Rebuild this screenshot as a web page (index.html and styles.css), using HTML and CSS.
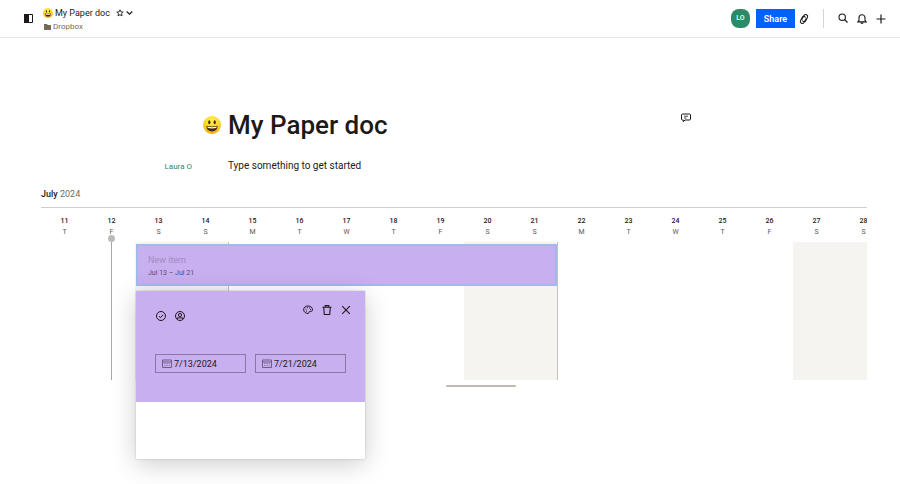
FILE: index.html
```html
<!DOCTYPE html>
<html lang="en">
<head>
  <meta charset="UTF-8">
  <meta name="viewport" content="width=device-width, initial-scale=1">
  <title>My Paper doc</title>
  <link rel="stylesheet" href="styles.css">
</head>
<body>

  <svg class="sprite" width="0" height="0" aria-hidden="true">
    <radialGradient id="face" cx="50%" cy="25%" r="80%">
      <stop offset="0" stop-color="#fff04a"/>
      <stop offset="0.6" stop-color="#fbd424"/>
      <stop offset="1" stop-color="#ee9d13"/>
    </radialGradient>
    <symbol id="smile" viewBox="0 0 18 18">
      <circle cx="9" cy="9" r="9" fill="url(#face)"/>
      <ellipse cx="6.3" cy="6.2" rx="1.1" ry="2" fill="#43280b"/>
      <ellipse cx="11.7" cy="6.2" rx="1.1" ry="2" fill="#43280b"/>
      <path d="M3.4 9.8c3.6 1 7.600 1 11.200 0 0 3.600-2.300 5.700-5.600 5.700s-5.600-2.100-5.600-5.700z" fill="#43280b"/>
      <path d="M4.300 10.600c3.100.7 6.300.7 9.400 0l-.4 1.500c-2.800.6-5.800.6-8.600 0z" fill="#fff"/>
    </symbol>
    <symbol id="calendar" viewBox="0 0 10 9">
      <path d="M.5 1h9v7.500h-9zM.5 3h9" fill="none" stroke="#6f5d84"/>
      <path d="M2 4.500h6M2 6.500h6" stroke="#8c78a6" stroke-dasharray="1 .6"/>
    </symbol>
  </svg>

  <header class="topbar">
    <button class="icon-btn" aria-label="Toggle sidebar">
      <svg width="9" height="9" viewBox="0 0 9 9"><path d="M.5.5h8v8h-8z" fill="none" stroke="#1e1919"/><path d="M0 0h5v9H0z" fill="#1e1919"/></svg>
    </button>
    <div class="doc-info">
      <div class="doc-name">
        <svg width="10" height="10"><use href="#smile"/></svg>
        <span>My Paper doc</span>
        <button class="icon-btn star" aria-label="Star">
          <svg width="8" height="8" viewBox="0 0 8 8"><path d="M4 .8l.9 2.100 2.300.2-1.700 1.500.5 2.300L4 5.700 2 6.900l.5-2.300L.8 3.100l2.300-.2z" fill="none" stroke="#1e1919" stroke-width=".9"/></svg>
        </button>
        <button class="icon-btn" aria-label="More">
          <svg width="7" height="8" viewBox="0 0 7 8"><path d="M.7 2.500l2.800 2.700 2.800-2.700" fill="none" stroke="#1e1919" stroke-width="1.200"/></svg>
        </button>
      </div>
      <a class="folder" href="#">
        <svg width="7" height="6" viewBox="0 0 7 6"><path d="M0 0h3l.7 1H7v5H0z" fill="#736c5c"/></svg>
        Dropbox
      </a>
    </div>
    <div class="actions">
      <span class="avatar">LO</span>
      <button class="share">Share</button>
      <button class="icon-btn link" aria-label="Copy link">
        <svg width="10" height="12" viewBox="0 0 10 12" fill="none" stroke="#1e1919" stroke-width="1.100" stroke-linecap="round"><path d="M2.900 6.300L5 2.500C6.200.5 9.500 2.200 8.500 4.300L6.600 8c-.8 1.300-2.600.9-2.900-.3"/><path d="M7.100 5.700L5 9.500C3.800 11.500.5 9.800 1.500 7.700L3.400 4c.8-1.300 2.600-.9 2.900.3"/></svg>
      </button>
      <span class="divider"></span>
      <button class="icon-btn" aria-label="Search">
        <svg width="10" height="12" viewBox="0 0 10 12"><circle cx="4.200" cy="4.200" r="3.200" fill="none" stroke="#1e1919" stroke-width="1.100"/><path d="M6.500 6.500L9.500 9.500" stroke="#1e1919" stroke-width="1.200"/></svg>
      </button>
      <button class="icon-btn" aria-label="Notifications">
        <svg width="10" height="10" viewBox="0 0 10 10" fill="none" stroke="#1e1919" stroke-width="1.100"><path d="M.8 7.900h8.400L8 6.300V3.700a3 3 0 0 0-6 0v2.600z"/><path d="M3.800 8.200c.2 1.600 2.200 1.600 2.400 0"/></svg>
      </button>
      <button class="icon-btn" aria-label="Create">
        <svg width="10" height="10" viewBox="0 0 10 10"><path d="M5 .5v9M.5 5h9" stroke="#1e1919" stroke-width="1.200"/></svg>
      </button>
    </div>
  </header>

  <main>
    <div class="doc-row title-row">
      <svg class="emoji" width="18" height="18"><use href="#smile"/></svg>
      <h1>My Paper doc</h1>
      <button class="icon-btn comment" aria-label="Add comment">
        <svg width="10" height="10" viewBox="0 0 10 10" fill="none" stroke="#1e1919"><path d="M1.500 1h7q1 0 1 1v4q0 1-1 1H4L2.300 8.700V7h-.8q-1 0-1-1V2q0-1 1-1z" stroke-linejoin="round"/><path d="M3 3.200h4M3 5h2.500" stroke-width=".8"/></svg>
      </button>
    </div>
    <div class="doc-row text-row">
      <span class="author">Laura O</span>
      <p>Type something to get started</p>
    </div>

    <section class="timeline">
      <h2>July <span>2024</span></h2>
      <div class="board">
        <div class="days">
          <div class="day"><b>11</b>T</div>
          <div class="day"><b>12</b>F</div>
          <div class="day"><b>13</b>S</div>
          <div class="day"><b>14</b>S</div>
          <div class="day"><b>15</b>M</div>
          <div class="day"><b>16</b>T</div>
          <div class="day"><b>17</b>W</div>
          <div class="day"><b>18</b>T</div>
          <div class="day"><b>19</b>F</div>
          <div class="day"><b>20</b>S</div>
          <div class="day"><b>21</b>S</div>
          <div class="day"><b>22</b>M</div>
          <div class="day"><b>23</b>T</div>
          <div class="day"><b>24</b>W</div>
          <div class="day"><b>25</b>T</div>
          <div class="day"><b>26</b>F</div>
          <div class="day"><b>27</b>S</div>
          <div class="day"><b>28</b>S</div>
          <div class="today"></div>
          <div class="weekend first"></div>
          <div class="weekend second"></div>
          <div class="weekend third"></div>
          <div class="item">
            <div class="item-name">New item</div>
            <div class="item-dates">Jul 13 – Jul 21</div>
          </div>
        </div>

        <div class="popover">
          <div class="popover-top">
            <div class="tools">
              <div class="tool-group left">
                <button class="icon-btn" aria-label="Mark done">
                  <svg width="10" height="10" viewBox="0 0 10 10" fill="none" stroke="#1e1919"><circle cx="5" cy="5" r="4.500"/><path d="M3 5.200l1.500 1.400L7.100 3.700"/></svg>
                </button>
                <button class="icon-btn" aria-label="Assign">
                  <svg width="10" height="10" viewBox="0 0 10 10" fill="none" stroke="#1e1919"><circle cx="5" cy="5" r="4.500"/><circle cx="5" cy="4" r="1.600"/><path d="M2.200 8.100V6.900h5.600v1.200"/></svg>
                </button>
              </div>
              <div class="tool-group">
                <button class="icon-btn" aria-label="Color">
                  <svg width="10" height="10" viewBox="0 0 10 10" fill="none" stroke="#1e1919"><path d="M5 1C2.500 1 .6 2.500.6 4.600S2.500 8.500 5 8.500c1.300 0 .5-1.300 1.300-1.800 1-.6 3.200.4 3.200-2C9.500 2.500 7.500 1 5 1z"/><path d="M2.400 4.200h1M3.900 2.700h1M6 2.900h1M7 4.600h1M3 6.100h1"/></svg>
                </button>
                <button class="icon-btn" aria-label="Delete">
                  <svg width="10" height="10" viewBox="0 0 10 10" fill="none" stroke="#1e1919" stroke-width="1.100"><path d="M.5 2.200h9M3.200 2V.6h3.600V2M1.700 2.300l.6 7.200h5.400l.6-7.200"/></svg>
                </button>
                <button class="icon-btn" aria-label="Close">
                  <svg width="10" height="10" viewBox="0 0 10 10"><path d="M1.200 1.200l7.600 7.600M8.800 1.200L1.200 8.800" stroke="#1e1919" stroke-width="1.100"/></svg>
                </button>
              </div>
            </div>
            <div class="dates">
              <label class="date">
                <svg width="10" height="9"><use href="#calendar"/></svg>
                <input type="text" value="7/13/2024" aria-label="Start date">
              </label>
              <label class="date">
                <svg width="10" height="9"><use href="#calendar"/></svg>
                <input type="text" value="7/21/2024" aria-label="End date">
              </label>
            </div>
          </div>
          <div class="popover-note"></div>
        </div>
      </div>
      <div class="scroll-thumb"></div>
    </section>
  </main>

</body>
</html>
```

FILE: styles.css
```css
* {
  box-sizing: border-box;
}

body {
  margin: 0;
  min-height: 100vh;
  font-family: Roboto, "Liberation Sans", sans-serif;
  color: #1e1919;
  background: #fff;
}

svg {
  display: block;
  flex: none;
}

.sprite {
  position: absolute;
}

button,
input {
  font: inherit;
  color: inherit;
  background: none;
  border: 0;
  padding: 0;
}

button {
  cursor: pointer;
}

.icon-btn {
  display: flex;
}

/* top bar */

.topbar {
  display: flex;
  align-items: center;
  gap: 10px;
  height: 38px;
  padding: 0 14px 0 24px;
  border-bottom: 1px solid #e6e6e6;
}

.doc-info {
  display: flex;
  flex-direction: column;
  gap: 2px;
  padding-top: 3px;
}

.doc-name {
  display: flex;
  align-items: center;
  gap: 2px;
  font-size: 9px;
  line-height: 12px;
}

.star {
  margin-left: 4px;
}

.folder {
  display: flex;
  align-items: center;
  gap: 2px;
  padding-left: 1px;
  font-size: 8px;
  line-height: 12px;
  color: #736c5c;
  text-decoration: none;
}

.actions {
  display: flex;
  align-items: center;
  gap: 9px;
  margin-left: auto;
}

.avatar {
  width: 19px;
  height: 19px;
  margin-right: -3px;
  border-radius: 8px;
  background: #2d8a66;
  color: #fff;
  font-size: 7px;
  font-weight: 500;
  line-height: 19px;
  text-align: center;
}

.share {
  width: 39px;
  height: 19px;
  background: #0061fe;
  color: #fff;
  font-size: 9px;
  font-weight: 600;
}

.link {
  margin-left: -5px;
}

.divider {
  width: 1px;
  height: 19px;
  margin: 0 5px;
  background: #d5d5d5;
}

/* document */

.doc-row {
  display: grid;
  grid-template-columns: 1fr 444px 1fr;
  align-items: center;
}

.title-row {
  padding-top: 70px;
}

.emoji {
  justify-self: end;
  margin-right: 7px;
}

h1 {
  margin: 0;
  font-size: 26px;
  font-weight: 500;
  line-height: 34px;
}

.comment {
  align-self: start;
  padding: 5px 9px;
}

.text-row {
  padding-top: 16px;
}

.author {
  justify-self: end;
  margin-right: 36px;
  font-size: 8px;
  color: #2d8a66;
}

p {
  margin: 0;
  font-size: 10px;
  line-height: 16px;
}

/* timeline */

.timeline {
  margin: 12px 33px 0 41px;
}

h2 {
  margin: 0;
  padding-bottom: 5px;
  border-bottom: 1px solid #d0d0d0;
  font-size: 9px;
  font-weight: 500;
  line-height: 16px;
}

h2 span {
  font-weight: 400;
  color: #736c5c;
}

.board {
  position: relative;
}

.days {
  display: grid;
  grid-template-columns: repeat(18, 47px);
  grid-template-rows: 34px 138px;
  overflow: hidden;
}

.day {
  display: flex;
  flex-direction: column;
  padding-top: 8px;
  font-size: 7px;
  line-height: 11px;
  text-align: center;
  color: #5c5757;
}

.day b {
  font-weight: 500;
  color: #1e1919;
}

.weekend {
  grid-row: 2;
  background: #f5f4f1;
  border-right: 1px solid #c4c2be;
}

.first {
  grid-column: 3 / span 2;
}

.second {
  grid-column: 10 / span 2;
}

.third {
  grid-column: 17 / span 2;
}

/* marker line with a dot on top */
.today {
  grid-column: 2;
  grid-row: 2;
  justify-self: center;
  width: 1px;
  background: #aaa8a5;
}

.today::before {
  content: "";
  display: block;
  width: 7px;
  height: 7px;
  margin: -7px -3px 0;
  border-radius: 50%;
  background: #bcbab7;
}

.item {
  grid-column: 3 / span 9;
  grid-row: 2;
  height: 42px;
  margin: 2px 1px 0;
  padding: 8px 10px;
  border: 2px solid #a3b9ec;
  background: #c8aff0;
}

.item-name {
  font-size: 9px;
  line-height: 12px;
  color: #a08bbf;
}

.item-dates {
  font-size: 7px;
  line-height: 14px;
  color: #5d4c73;
}

.popover {
  position: absolute;
  top: 83px;
  left: 95px;
  width: 229px;
  background: #fff;
  box-shadow: 0 5px 24px rgba(0, 0, 0, 0.2), 0 0 2px rgba(0, 0, 0, 0.2);
}

.popover-top {
  padding: 14px 19px 29px;
  background: #c8aff0;
}

.tools {
  display: flex;
  justify-content: space-between;
  margin-right: -5px;
}

.tool-group {
  display: flex;
  gap: 9px;
}

.tools .left {
  padding: 6px 1px 0;
}

.dates {
  display: grid;
  grid-template-columns: 1fr 1fr;
  gap: 9px;
  margin-top: 33px;
}

.date {
  display: flex;
  align-items: center;
  gap: 2px;
  height: 19px;
  padding: 0 6px;
  border: 1px solid #8b76a8;
}

.date input {
  width: 100%;
  min-width: 0;
  font-size: 9px;
}

.popover-note {
  height: 57px;
}

.scroll-thumb {
  width: 70px;
  height: 2px;
  margin: 5px 0 0 49%;
  border-radius: 1px;
  background: #c0bbb0;
}
```
